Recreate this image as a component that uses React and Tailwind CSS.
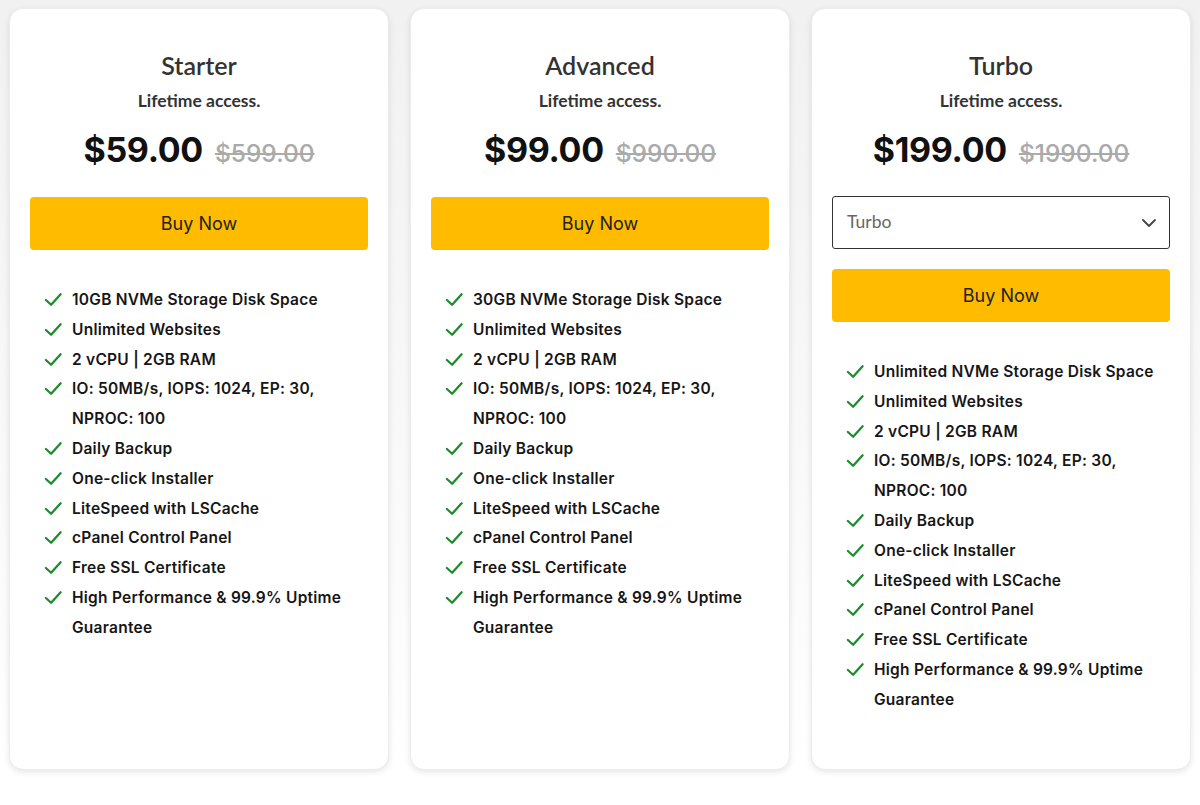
const PLANS = [
  {
    name: 'Starter',
    price: '$59.00',
    old: '$599.00',
    features: [
      '10GB NVMe Storage Disk Space',
      'Unlimited Websites',
      '2 vCPU | 2GB RAM',
      'IO: 50MB/s, IOPS: 1024, EP: 30, NPROC: 100',
      'Daily Backup',
      'One-click Installer',
      'LiteSpeed with LSCache',
      'cPanel Control Panel',
      'Free SSL Certificate',
      'High Performance & 99.9% Uptime Guarantee',
    ],
  },
  {
    name: 'Advanced',
    price: '$99.00',
    old: '$990.00',
    features: [
      '30GB NVMe Storage Disk Space',
      'Unlimited Websites',
      '2 vCPU | 2GB RAM',
      'IO: 50MB/s, IOPS: 1024, EP: 30, NPROC: 100',
      'Daily Backup',
      'One-click Installer',
      'LiteSpeed with LSCache',
      'cPanel Control Panel',
      'Free SSL Certificate',
      'High Performance & 99.9% Uptime Guarantee',
    ],
  },
  {
    name: 'Turbo',
    price: '$199.00',
    old: '$1990.00',
    select: true,
    features: [
      'Unlimited NVMe Storage Disk Space',
      'Unlimited Websites',
      '2 vCPU | 2GB RAM',
      'IO: 50MB/s, IOPS: 1024, EP: 30, NPROC: 100',
      'Daily Backup',
      'One-click Installer',
      'LiteSpeed with LSCache',
      'cPanel Control Panel',
      'Free SSL Certificate',
      'High Performance & 99.9% Uptime Guarantee',
    ],
  },
];

function Check() {
  return (
    <svg viewBox="0 0 20 20" className="w-[19px] h-[19px] shrink-0 mt-[5px]" fill="none">
      <path d="M2 10.5 L7.5 15.5 L17.5 4.5" stroke="#1c8c2c" strokeWidth="2.4" strokeLinecap="round" strokeLinejoin="round" />
    </svg>
  );
}

function PlanCard({ plan }) {
  return (
    <div className="bg-white rounded-[14px] border border-[#ececec] shadow-[0_2px_6px_rgba(0,0,0,0.10)] px-5 pt-10">
      <h2 className="text-center text-[25px] leading-8 font-semibold text-[#333]" style={{ fontFamily: 'Lato, sans-serif' }}>
        {plan.name}
      </h2>
      <p className="mt-2 text-center text-[17.5px] leading-6 font-bold text-[#333]" style={{ fontFamily: 'Lato, sans-serif' }}>
        Lifetime access.
      </p>
      <div className="mt-[11px] flex items-baseline justify-center gap-3 h-10" style={{ fontFamily: 'Inter, sans-serif' }}>
        <span className="text-[34px] font-bold text-[#111] tracking-[-0.3px]">{plan.price}</span>
        <span className="text-[24.5px] font-medium text-[#aaa] line-through decoration-2">{plan.old}</span>
      </div>

      {plan.select && (
        <div className="mt-[32px] h-[53px] border-[1.5px] border-[#333] rounded-[3px] flex items-center justify-between pl-[14px] pr-[10px]" style={{ fontFamily: 'Lato, sans-serif' }}>
          <span className="text-[17.5px] text-[#666]">Turbo</span>
          <svg viewBox="0 0 20 20" className="w-5 h-5" fill="none">
            <path d="M4 7 L10 13 L16 7" stroke="#444" strokeWidth="1.8" strokeLinecap="round" strokeLinejoin="round" />
          </svg>
        </div>
      )}

      <button
        className={`${plan.select ? 'mt-[20px]' : 'mt-[33px]'} w-full h-[53px] bg-[#ffbb00] rounded-[4px] text-[18px] text-[#222]`}
        style={{ fontFamily: 'Inter, sans-serif' }}
      >
        Buy Now
      </button>

      <ul className="mt-[35px] ml-[14px] mr-[8px]" style={{ fontFamily: 'Inter, sans-serif' }}>
        {plan.features.map(f => (
          <li key={f} className="flex gap-[9px]">
            <Check />
            <span className="text-[15.5px] leading-[29.8px] font-semibold text-[#161616] tracking-[0.25px]">{f}</span>
          </li>
        ))}
      </ul>
    </div>
  );
}

export default function App() {
  return (
    <div className="min-h-screen bg-white">
      <div className="bg-gradient-to-b from-[#f1f1f1] to-white pt-[8px]">
        <div className="grid grid-cols-3 gap-[21px] px-[9px] h-[762px]">
          {PLANS.map(p => <PlanCard key={p.name} plan={p} />)}
        </div>
      </div>
    </div>
  );
}
